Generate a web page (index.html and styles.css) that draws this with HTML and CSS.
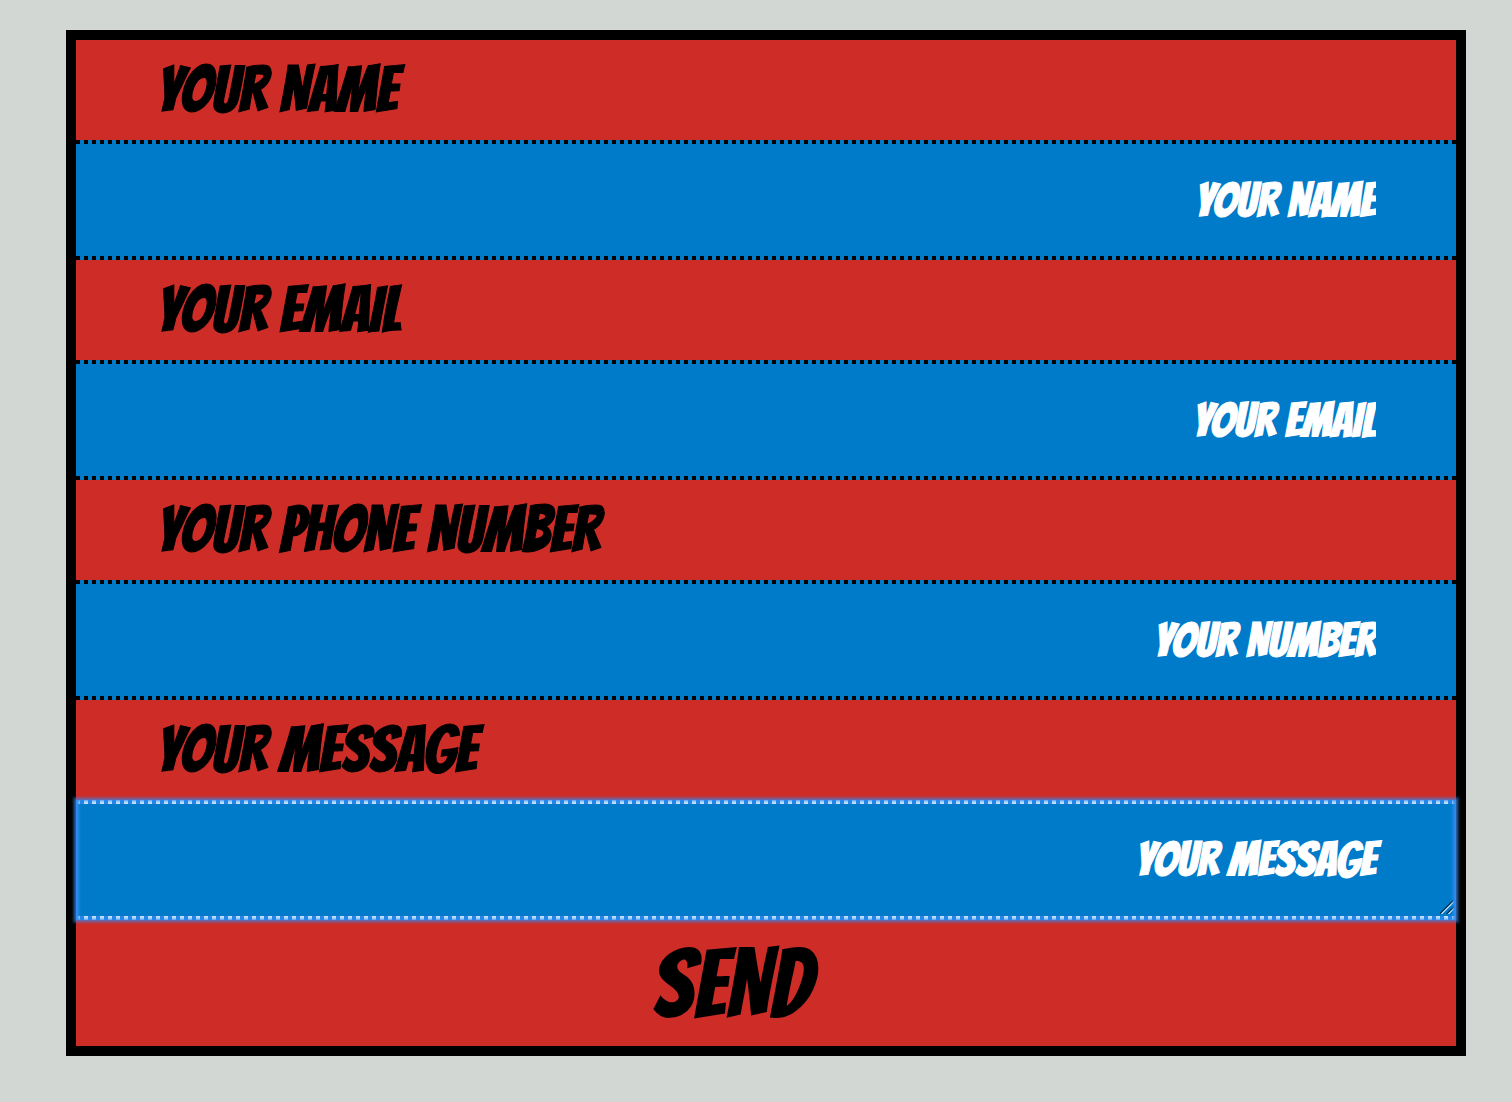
FILE: index.html
```html
<!DOCTYPE html>
<html lang="en">
<head>
  <meta charset="utf-8">
  <meta name="viewport" content="width=device-width, initial-scale=1">
  <title>Contact</title>
  <link rel="stylesheet" href="styles.css">
</head>
<body>
  <form class="contact">
    <label class="contact-label" for="name">YOUR NAME</label>
    <input class="contact-field" id="name" type="text" placeholder="YOUR NAME">
    <label class="contact-label" for="email">YOUR EMAIL</label>
    <input class="contact-field" id="email" type="email" placeholder="YOUR EMAIL">
    <label class="contact-label" for="phone">YOUR PHONE NUMBER</label>
    <input class="contact-field" id="phone" type="tel" placeholder="YOUR NUMBER">
    <label class="contact-label" for="message">YOUR MESSAGE</label>
    <textarea class="contact-field contact-message" id="message" rows="1" placeholder="YOUR MESSAGE"></textarea>
    <button class="contact-send" type="submit">SEND</button>
  </form>
</body>
</html>
```
FILE: styles.css
```css
* {
  box-sizing: border-box;
}

body {
  margin: 0;
  padding: 30px 46px 46px 66px;
  background: #d2d7d3;
  font-family: Bangers, "Liberation Sans", sans-serif;
}

.contact {
  display: flex;
  flex-direction: column;
  border: 10px solid #000;
  background: #cd2c27;
}

.contact-label {
  padding: 0 81px;
  color: #000;
  font-size: 64px;
  line-height: 100px;
  -webkit-text-stroke: 1px currentColor;
}

.contact-field {
  --dots: repeating-linear-gradient(to right, #000 0 4px, transparent 4px 8px);
  width: 100%;
  height: 120px;
  margin: 0;
  padding: 30px 80px;
  border: 0;
  border-radius: 0;
  outline: none;
  background:
    var(--dots) top / 100% 4px no-repeat,
    var(--dots) bottom / 100% 4px no-repeat,
    #007bc9;
  color: #fff;
  font: inherit;
  font-size: 48px;
  line-height: 60px;
  text-align: right;
  -webkit-text-stroke: 1px currentColor;
}

.contact-field::placeholder {
  color: #fff;
  opacity: 1;
}

.contact-message,
.contact-field:focus {
  --dots: repeating-linear-gradient(to right, #c4e0ff 0 4px, #2585e4 4px 8px);
  position: relative;
  box-shadow:
    0 0 2px 1px rgba(59, 130, 220, 0.7),
    0 0 2px 3px rgba(59, 135, 235, 0.4),
    inset 3px 0 3px #2d8cf0,
    inset -3px 0 3px #2d8cf0;
}

.contact-message {
  --grip: linear-gradient(135deg, transparent 46%, #063b60 46% 53%, #a9cfea 53% 60%, transparent 60% 70%, #063b60 70% 77%, #a9cfea 77% 84%, transparent 84%);
  display: block;
  overflow: hidden;
  background:
    var(--grip) right 2px bottom 6px / 14px 14px no-repeat,
    var(--dots) top / 100% 4px no-repeat,
    var(--dots) bottom / 100% 4px no-repeat,
    #007bc9;
  resize: none;
}

.contact-send {
  padding: 2px 68px 0 0;
  border: 0;
  background: transparent;
  color: #000;
  font: inherit;
  font-size: 96px;
  line-height: 124px;
  cursor: pointer;
}
```
